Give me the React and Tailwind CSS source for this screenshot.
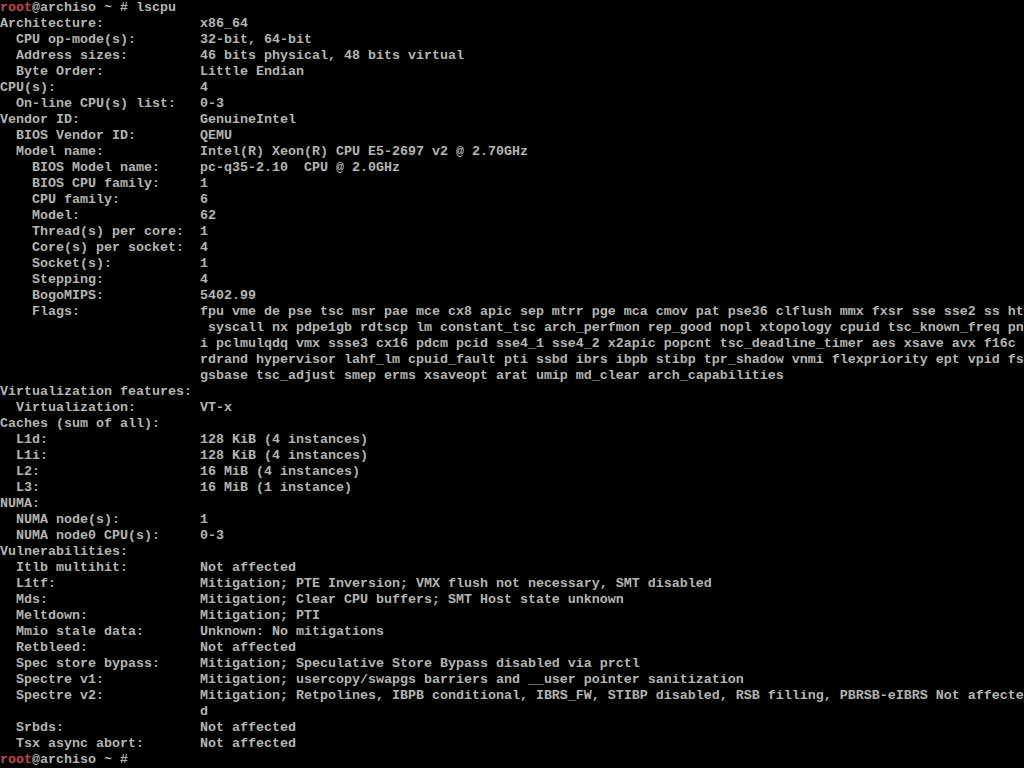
import React from 'react';

const rows = [
  [0, 'Architecture:', 'x86_64'],
  [2, 'CPU op-mode(s):', '32-bit, 64-bit'],
  [2, 'Address sizes:', '46 bits physical, 48 bits virtual'],
  [2, 'Byte Order:', 'Little Endian'],
  [0, 'CPU(s):', '4'],
  [2, 'On-line CPU(s) list:', '0-3'],
  [0, 'Vendor ID:', 'GenuineIntel'],
  [2, 'BIOS Vendor ID:', 'QEMU'],
  [2, 'Model name:', 'Intel(R) Xeon(R) CPU E5-2697 v2 @ 2.70GHz'],
  [4, 'BIOS Model name:', 'pc-q35-2.10  CPU @ 2.0GHz'],
  [4, 'BIOS CPU family:', '1'],
  [4, 'CPU family:', '6'],
  [4, 'Model:', '62'],
  [4, 'Thread(s) per core:', '1'],
  [4, 'Core(s) per socket:', '4'],
  [4, 'Socket(s):', '1'],
  [4, 'Stepping:', '4'],
  [4, 'BogoMIPS:', '5402.99'],
  [4, 'Flags:', 'fpu vme de pse tsc msr pae mce cx8 apic sep mtrr pge mca cmov pat pse36 clflush mmx fxsr sse sse2 ss ht'],
  [0, '', ' syscall nx pdpe1gb rdtscp lm constant_tsc arch_perfmon rep_good nopl xtopology cpuid tsc_known_freq pn'],
  [0, '', 'i pclmulqdq vmx ssse3 cx16 pdcm pcid sse4_1 sse4_2 x2apic popcnt tsc_deadline_timer aes xsave avx f16c'],
  [0, '', 'rdrand hypervisor lahf_lm cpuid_fault pti ssbd ibrs ibpb stibp tpr_shadow vnmi flexpriority ept vpid fs'],
  [0, '', 'gsbase tsc_adjust smep erms xsaveopt arat umip md_clear arch_capabilities'],
  [0, 'Virtualization features:', ''],
  [2, 'Virtualization:', 'VT-x'],
  [0, 'Caches (sum of all):', ''],
  [2, 'L1d:', '128 KiB (4 instances)'],
  [2, 'L1i:', '128 KiB (4 instances)'],
  [2, 'L2:', '16 MiB (4 instances)'],
  [2, 'L3:', '16 MiB (1 instance)'],
  [0, 'NUMA:', ''],
  [2, 'NUMA node(s):', '1'],
  [2, 'NUMA node0 CPU(s):', '0-3'],
  [0, 'Vulnerabilities:', ''],
  [2, 'Itlb multihit:', 'Not affected'],
  [2, 'L1tf:', 'Mitigation; PTE Inversion; VMX flush not necessary, SMT disabled'],
  [2, 'Mds:', 'Mitigation; Clear CPU buffers; SMT Host state unknown'],
  [2, 'Meltdown:', 'Mitigation; PTI'],
  [2, 'Mmio stale data:', 'Unknown: No mitigations'],
  [2, 'Retbleed:', 'Not affected'],
  [2, 'Spec store bypass:', 'Mitigation; Speculative Store Bypass disabled via prctl'],
  [2, 'Spectre v1:', 'Mitigation; usercopy/swapgs barriers and __user pointer sanitization'],
  [2, 'Spectre v2:', 'Mitigation; Retpolines, IBPB conditional, IBRS_FW, STIBP disabled, RSB filling, PBRSB-eIBRS Not affecte'],
  [0, '', 'd'],
  [2, 'Srbds:', 'Not affected'],
  [2, 'Tsx async abort:', 'Not affected'],
];

function Prompt({ cmd }) {
  return (
    <div className="h-4 leading-4 whitespace-pre">
      <span className="text-[#c84848]">root</span>
      <span>@archiso ~ # {cmd}</span>
    </div>
  );
}

export default function App() {
  return (
    <div
      className="w-[1024px] h-[768px] bg-black text-[#b4b4b4] text-[13.333px] font-bold overflow-hidden"
      style={{ fontFamily: '"Liberation Mono", "DejaVu Sans Mono", monospace' }}
    >
      <Prompt cmd="lscpu" />
      {rows.map(([indent, label, value], i) => {
        const left = (' '.repeat(indent) + label).padEnd(25, ' ');
        return (
          <div key={i} className="h-4 leading-4 whitespace-pre">
            {left + value}
          </div>
        );
      })}
      <Prompt cmd="" />
    </div>
  );
}
